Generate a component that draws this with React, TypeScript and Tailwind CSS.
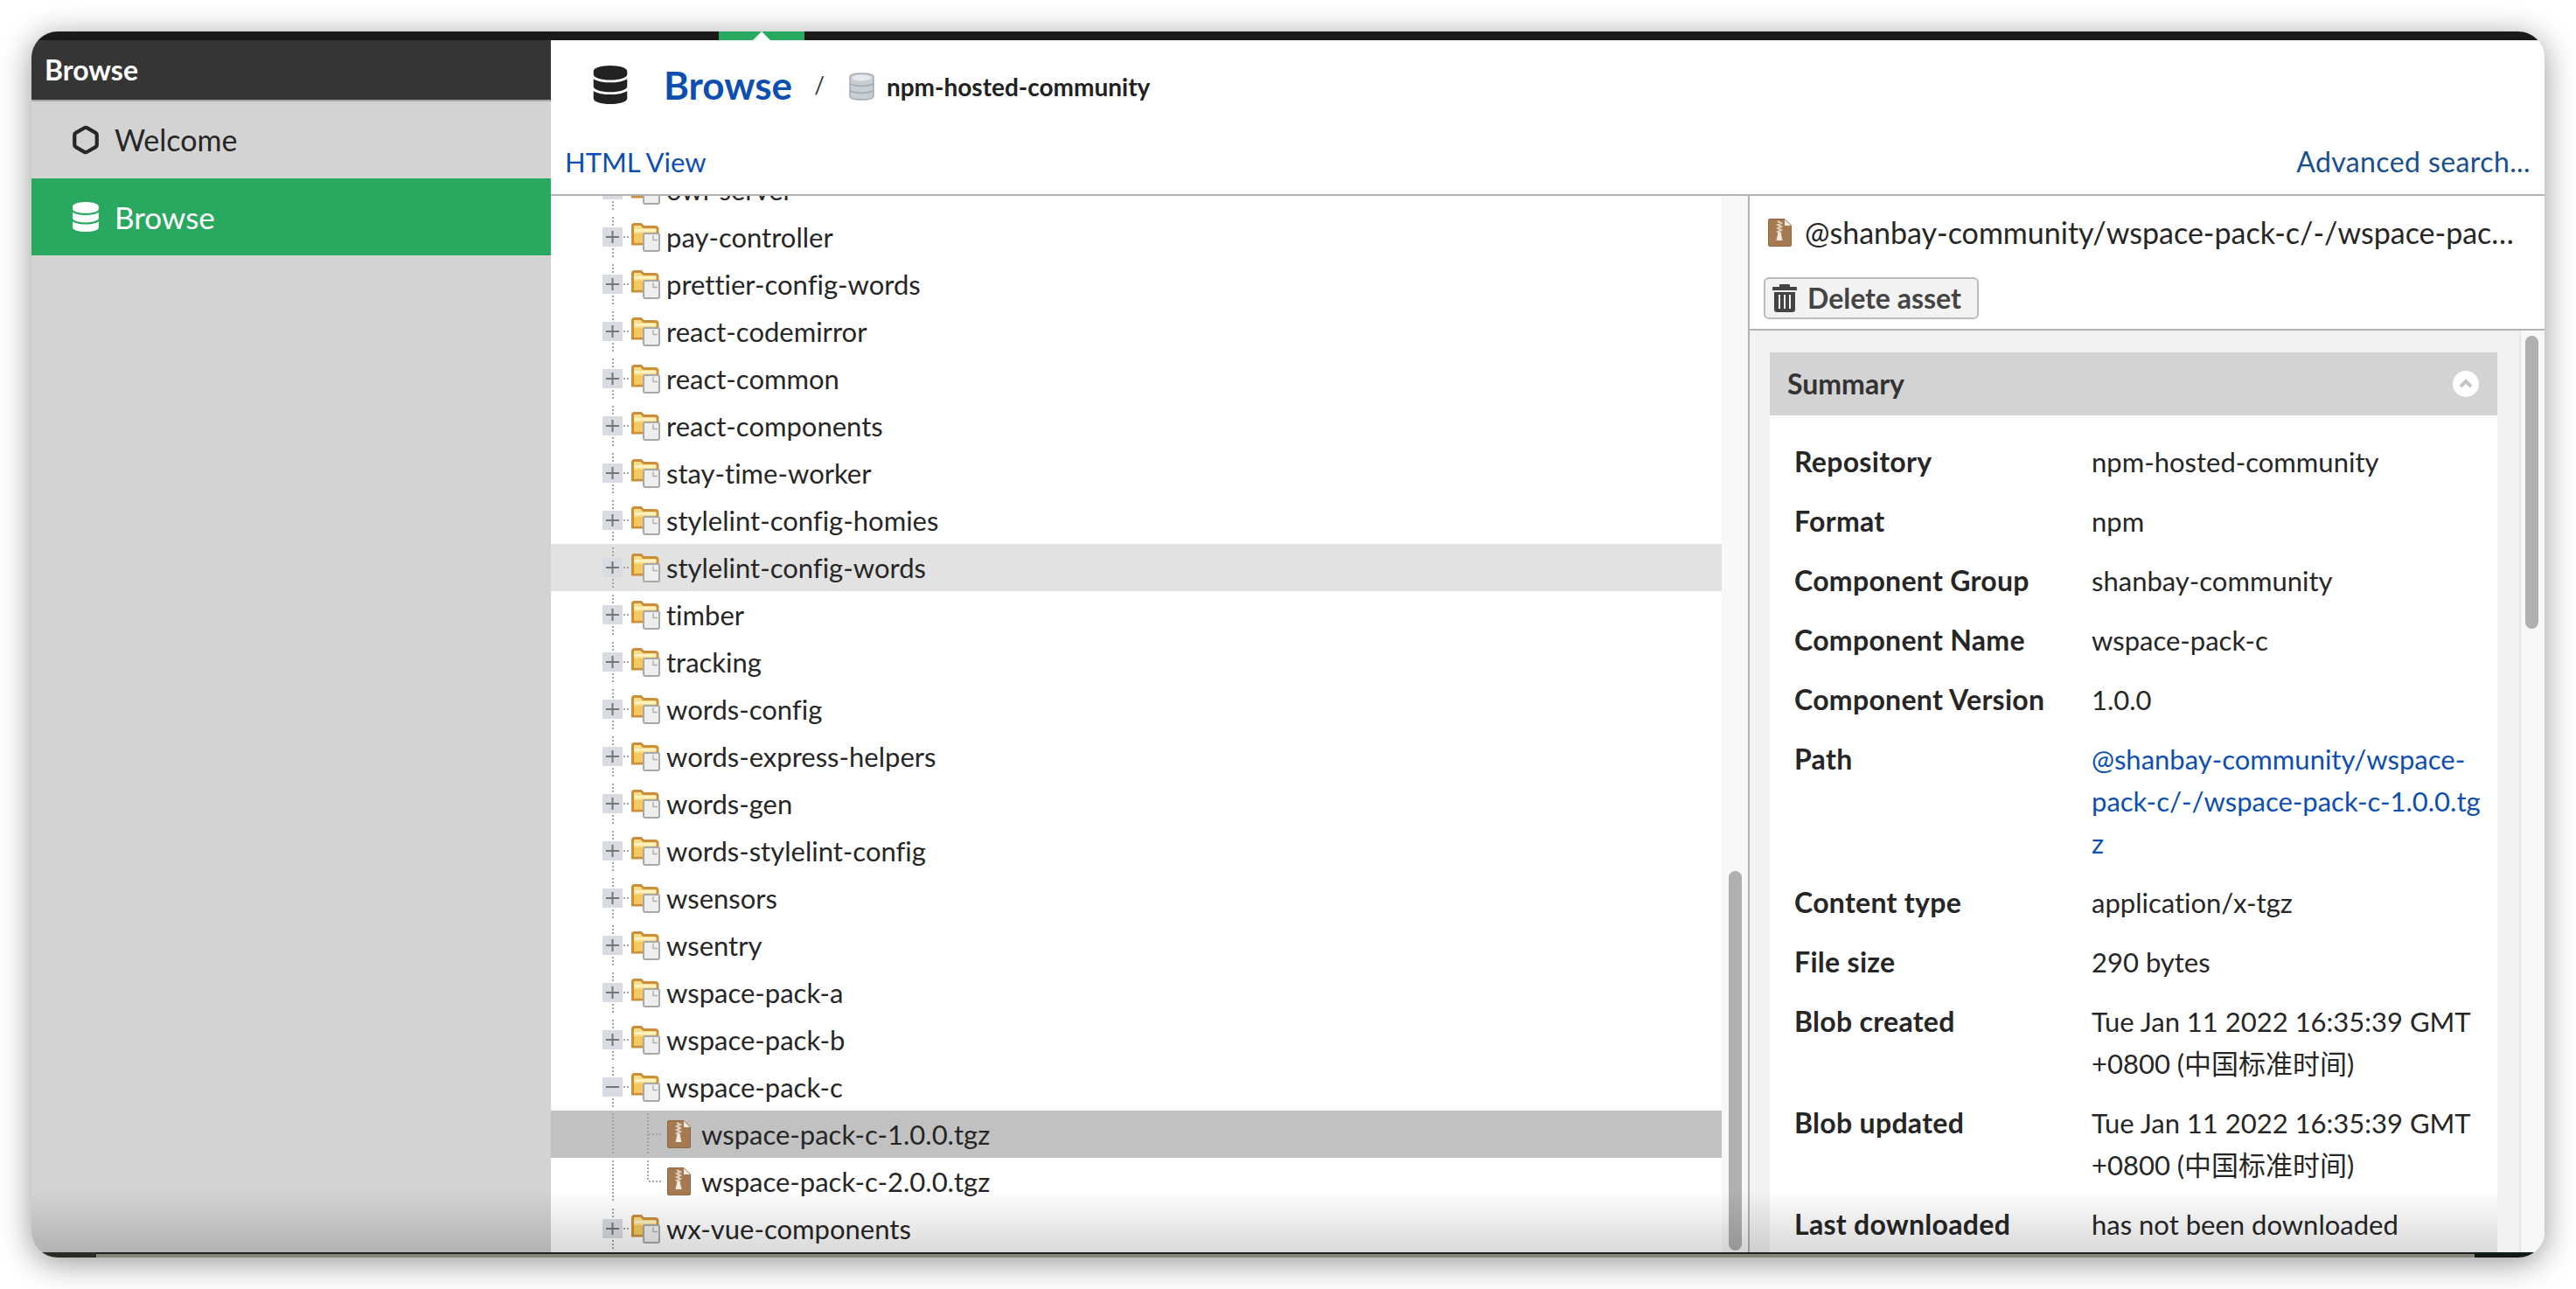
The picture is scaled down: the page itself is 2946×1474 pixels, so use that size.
import React from 'react';
import { FaDatabase } from 'react-icons/fa';
import { Hexagon } from 'lucide-react';

const folders = [
  'owl-server',
  'pay-controller',
  'prettier-config-words',
  'react-codemirror',
  'react-common',
  'react-components',
  'stay-time-worker',
  'stylelint-config-homies',
  'stylelint-config-words',
  'timber',
  'tracking',
  'words-config',
  'words-express-helpers',
  'words-gen',
  'words-stylelint-config',
  'wsensors',
  'wsentry',
  'wspace-pack-a',
  'wspace-pack-b',
  'wspace-pack-c',
];

const summary: { label: string; lines: string[]; link?: boolean }[] = [
  { label: 'Repository', lines: ['npm-hosted-community'] },
  { label: 'Format', lines: ['npm'] },
  { label: 'Component Group', lines: ['shanbay-community'] },
  { label: 'Component Name', lines: ['wspace-pack-c'] },
  { label: 'Component Version', lines: ['1.0.0'] },
  { label: 'Path', lines: ['@shanbay-community/wspace-', 'pack-c/-/wspace-pack-c-1.0.0.tg', 'z'], link: true },
  { label: 'Content type', lines: ['application/x-tgz'] },
  { label: 'File size', lines: ['290 bytes'] },
  { label: 'Blob created', lines: ['Tue Jan 11 2022 16:35:39 GMT', '+0800 (中国标准时间)'] },
  { label: 'Blob updated', lines: ['Tue Jan 11 2022 16:35:39 GMT', '+0800 (中国标准时间)'] },
  { label: 'Last downloaded', lines: ['has not been downloaded'] },
];

function FolderIcon() {
  return (
    <svg width="33" height="33" viewBox="0 0 33 33" className="shrink-0">
      <path d="M1.500 3.500 Q1.500 1.500 3.500 1.500 H11 L14 4.500 H27 Q30 4.500 30 7 V24 H1.500 Z" fill="#f9de8a" stroke="#cb8f3c" strokeWidth="3" />
      <path d="M3 12 H28.500 V22.500 H3 Z" fill="#f5c95b" />
      <path d="M3 8.500 H28.500" stroke="#fdf4cc" strokeWidth="2.500" />
      <rect x="14" y="12" width="18" height="20" rx="2" fill="#eeeeee" stroke="#a8a8a8" strokeWidth="2" />
      <path d="M25 14 V19.500 H30" fill="none" stroke="#b2b2b2" strokeWidth="1.500" />
    </svg>
  );
}

function ZipIcon({ className = '' }: { className?: string }) {
  return (
    <svg width="27" height="32" viewBox="0 0 27 32" className={`shrink-0 ${className}`}>
      <path d="M2 0.500 H19 L26.500 8 V30 Q26.500 31.500 25 31.500 H2 Q0.500 31.500 0.500 30 V2 Q0.500 0.500 2 0.500 Z" fill="#a67a50" stroke="#8f6843" />
      <path d="M19 1 L26 8 H19 Z" fill="#f5efe8" />
      <path d="M11 3 L15 5 L11 7 L15 9 L11 11 L15 13 L11 15 L15 17" fill="none" stroke="#ded0bf" strokeWidth="2" />
      <path d="M11.500 16 H14.500 L16.500 25 H9.500 Z" fill="#f4ece2" />
    </svg>
  );
}

function RepoIcon() {
  return (
    <svg width="29" height="32" viewBox="0 0 29 32" className="shrink-0">
      <path d="M1 5 Q1 1 14.500 1 Q28 1 28 5 V27 Q28 31 14.500 31 Q1 31 1 27 Z" fill="#c9ced3" stroke="#a4abb2" strokeWidth="1.500" />
      <ellipse cx="14.500" cy="6" rx="11" ry="3.500" fill="#e6e9ec" />
      <path d="M1 13 Q14.500 18 28 13 M1 21 Q14.500 26 28 21" fill="none" stroke="#a4abb2" strokeWidth="1.500" />
    </svg>
  );
}

function TrashIcon() {
  return (
    <svg width="28" height="32" viewBox="0 0 28 32" className="shrink-0">
      <path d="M9 0 H19 Q20 0 20 1 V3 H27 Q28 3 28 4 V7 H0 V4 Q0 3 1 3 H8 V1 Q8 0 9 0 Z" fill="#444" />
      <path fillRule="evenodd" d="M2 9 H26 V29 Q26 32 23 32 H5 Q2 32 2 29 Z M7 12 V28 H9 V12 Z M13 12 V28 H15 V12 Z M19 12 V28 H21 V12 Z" fill="#444" />
    </svg>
  );
}

function FolderConnector({ open }: { open?: boolean }) {
  return (
    <svg width="33" height="54" viewBox="0 0 33 54" className="shrink-0">
      <path d="M12 4 V50" stroke="#a3a3a3" strokeWidth="2" strokeDasharray="2 2" />
      <rect x="0" y="16" width="23" height="22" rx="1" fill="#d8dbe1" />
      <path d="M24 27 H30" stroke="#a3a3a3" strokeWidth="2" strokeDasharray="2 2" />
      <path d="M4 27 H19" stroke="#757575" strokeWidth="2" />
      {!open && <path d="M11.500 20 V34" stroke="#757575" strokeWidth="2" />}
    </svg>
  );
}

function FileConnector({ last }: { last?: boolean }) {
  return (
    <svg width="70" height="54" viewBox="0 0 70 54" className="shrink-0">
      <path d="M12 3 V49" stroke="#a3a3a3" strokeWidth="2" strokeDasharray="2 2" />
      <path d={last ? 'M52 3 V27' : 'M52 3 V49'} stroke="#a3a3a3" strokeWidth="2" strokeDasharray="2 2" />
      <path d="M53 27 H69" stroke="#a3a3a3" strokeWidth="2" strokeDasharray="2 2" />
    </svg>
  );
}

function FolderRow({ name, open }: { name: string; open?: boolean }) {
  return (
    <div className={`flex h-[54px] items-center pl-[59px] ${name === 'stylelint-config-words' ? 'bg-[#e2e2e2]' : ''}`}>
      <FolderConnector open={open} />
      <FolderIcon />
      <span className="ml-[7px] text-[#262626]">{name}</span>
    </div>
  );
}

function FileRow({ name, selected, last }: { name: string; selected?: boolean; last?: boolean }) {
  return (
    <div className={`flex h-[54px] items-center pl-[59px] ${selected ? 'bg-[#c1c1c1]' : ''}`}>
      <FileConnector last={last} />
      <ZipIcon className="ml-1" />
      <span className="ml-3 text-[#262626]">{name}</span>
    </div>
  );
}

export default function App() {
  return (
    <div className="h-[1474px] w-[2946px] overflow-hidden bg-white pl-[36px] pt-[36px] font-['Lato','Noto_Sans_CJK_SC',sans-serif] text-[31px] leading-[48px] [font-variant-ligatures:none]">
      <div className="relative flex h-[1402px] w-[2874px] flex-col overflow-hidden rounded-[30px] shadow-[0_6px_36px_rgba(0,0,0,0.42)]">
        {/* top strip */}
        <div className="flex h-[10px] shrink-0 bg-[#1a1a1a] pl-[786px]">
          <div className="flex h-full w-[98px] items-end justify-center bg-[#29a85f]">
            <div className="h-0 w-0 border-x-[10px] border-b-[10px] border-x-transparent border-b-white" />
          </div>
        </div>

        <div className="flex min-h-0 flex-1">
          {/* sidebar */}
          <aside className="flex w-[594px] shrink-0 flex-col bg-[#d3d3d3]">
            <div className="flex h-[70px] items-center border-b-2 border-[#a8a8a8] bg-[#353535] pl-[15px] text-[32px] font-bold text-white">
              Browse
            </div>
            <div className="flex h-[88px] items-center gap-[16px] pl-[45px] text-[#262626]">
              <Hexagon className="h-[34px] w-[34px]" strokeWidth={3} />
              <span className="text-[34px]">Welcome</span>
            </div>
            <div className="flex h-[88px] items-center gap-[16px] bg-[#29a85f] pl-[45px] text-white">
              <FaDatabase className="h-[34px] w-[34px]" />
              <span className="text-[35px]">Browse</span>
            </div>
          </aside>

          <main className="flex min-w-0 flex-1 flex-col bg-white">
            {/* header */}
            <header className="flex h-[178px] shrink-0 flex-col border-b-2 border-[#b3b3b3]">
              <div className="flex h-[102px] items-center pl-[48px]">
                <FaDatabase className="h-[44px] w-[40px] text-[#222]" />
                <span className="ml-[41px] text-[44px] font-bold text-[#0d4fb0]">Browse</span>
                <span className="ml-[25px] text-[26px] text-[#333]">/</span>
                <span className="ml-[28px] pt-[4px]"><RepoIcon /></span>
                <span className="ml-[14px] pt-[4px] text-[28px] font-bold text-[#222]">npm-hosted-community</span>
              </div>
              <div className="mt-[13px] flex items-center justify-between px-[16px]">
                <span className="text-[#0d4fb0]">HTML View</span>
                <span className="text-[32px] tracking-[0.4px] text-[#17508f]">Advanced search...</span>
              </div>
            </header>

            <div className="flex min-h-0 flex-1">
              {/* tree */}
              <div className="min-w-0 flex-1 overflow-hidden">
                <div className="-mt-[34px]">
                  {folders.map(name => (
                    <FolderRow key={name} name={name} open={name === 'wspace-pack-c'} />
                  ))}
                  <FileRow name="wspace-pack-c-1.0.0.tgz" selected />
                  <FileRow name="wspace-pack-c-2.0.0.tgz" last />
                  <FolderRow name="wx-vue-components" />
                </div>
              </div>
              <div className="w-[30px] shrink-0 bg-[#f8f8f8] pl-[8px] pt-[772px]">
                <div className="h-[434px] w-[15px] rounded-full bg-[#b0b0b0]" />
              </div>

              {/* asset panel */}
              <section className="flex w-[911px] shrink-0 flex-col border-l-2 border-[#b3b3b3]">
                <div className="flex h-[84px] shrink-0 items-center pl-[21px]">
                  <ZipIcon />
                  <span className="ml-[15px] w-[817px] truncate text-[34px] text-[#262626]">
                    @shanbay-community/wspace-pack-c/-/wspace-pack-c-1.0.0.tgz
                  </span>
                </div>
                <div className="flex h-[70px] shrink-0 items-start border-b-2 border-[#b3b3b3] pl-[16px] pt-[9px]">
                  <button className="flex h-[48px] w-[246px] items-center gap-[12px] rounded-md border-2 border-[#bbbbbb] bg-[#f3f3f3] pl-[8px] text-[32px] font-bold text-[#444]">
                    <TrashIcon />
                    Delete asset
                  </button>
                </div>

                <div className="flex min-h-0 flex-1 bg-[#f2f2f2]">
                  <div className="w-[880px] shrink-0 pl-[23px] pr-[25px] pt-[25px]">
                    <div className="h-[1100px] bg-white">
                      <div className="flex h-[72px] items-center justify-between bg-[#d3d3d3] pl-[20px] pr-[21px]">
                        <span className="text-[32px] font-bold text-[#333]">Summary</span>
                        <svg width="30" height="30" viewBox="0 0 30 30">
                          <circle cx="15" cy="15" r="15" fill="#fff" />
                          <path d="M9 18 L15 12 L21 18" fill="none" stroke="#c4c4c4" strokeWidth="4" />
                        </svg>
                      </div>
                      <div className="grid grid-cols-[340px_1fr] gap-y-[20px] pl-[28px] pt-[29px] text-[#262626]">
                        {summary.map(row => (
                          <React.Fragment key={row.label}>
                            <div className="text-[32px] font-bold tracking-[0.3px]">{row.label}</div>
                            <div className={row.link ? 'text-[#0d4fb0]' : ''}>
                              {row.lines.map(line => (
                                <div key={line} className="whitespace-nowrap">{line}</div>
                              ))}
                            </div>
                          </React.Fragment>
                        ))}
                      </div>
                    </div>
                  </div>
                  <div className="flex-1 border-l-2 border-[#e6e6e6] bg-[#f8f8f8] pl-[5px] pt-[6px]">
                    <div className="h-[335px] w-[15px] rounded-full bg-[#b0b0b0]" />
                  </div>
                </div>
              </section>
            </div>
          </main>
        </div>

        {/* bottom edge */}
        <div className="flex h-[6px] shrink-0">
          <div className="w-[74px] bg-[#2a2a26]" />
          <div className="flex-1 border-t-2 border-[#1e1e1e] bg-[#86867a]" />
          <div className="w-[80px] bg-[#111a14]" />
        </div>

        {/* bottom shading */}
        <div className="pointer-events-none absolute bottom-[6px] left-0 right-[54px] h-[72px] bg-gradient-to-b from-transparent to-black/15" />
      </div>
    </div>
  );
}
